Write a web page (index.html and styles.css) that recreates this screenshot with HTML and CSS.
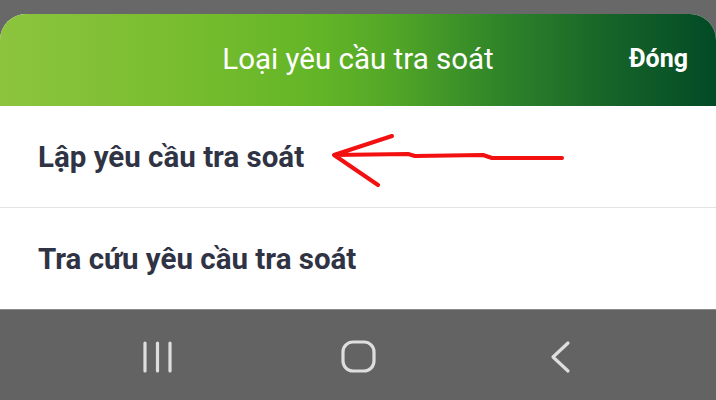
FILE: index.html
```html
<!DOCTYPE html>
<html lang="vi">
<head>
    <meta charset="UTF-8">
    <meta name="viewport" content="width=device-width, initial-scale=1.0">
    <title>Loại yêu cầu tra soát</title>
    <link rel="stylesheet" href="styles.css">
</head>
<body>
    <div class="screen">
        <div class="sheet">
            <div class="sheet-header">
                <div class="sheet-title">Loại yêu cầu tra soát</div>
                <div class="sheet-close">Đóng</div>
            </div>
            <div class="option-list">
                <div class="option">
                    Lập yêu cầu tra soát
                    <svg class="annotation" width="260" height="70" viewBox="0 0 260 70">
                        <path d="M72 13 L14 32 L58 62 M14 32 L88 31 L95 33 L163 32 L172 35 L242 35"
                              fill="none" stroke="#f21010" stroke-width="4" stroke-linecap="round" stroke-linejoin="round"/>
                    </svg>
                </div>
                <div class="option">Tra cứu yêu cầu tra soát</div>
            </div>
        </div>
        <div class="nav-bar">
            <svg class="nav-icon" width="40" height="40" viewBox="0 0 40 40">
                <path d="M7 6 V34 M19.5 6 V34 M32 6 V34" stroke="#dedede" stroke-width="3.2" stroke-linecap="round"/>
            </svg>
            <svg class="nav-icon" width="40" height="40" viewBox="0 0 40 40">
                <rect x="4" y="5" width="31" height="29" rx="10" fill="none" stroke="#dedede" stroke-width="3.2"/>
            </svg>
            <svg class="nav-icon" width="40" height="40" viewBox="0 0 40 40">
                <path d="M28 6 L13 20 L28 34" fill="none" stroke="#dedede" stroke-width="3.2" stroke-linecap="round" stroke-linejoin="round"/>
            </svg>
        </div>
    </div>
</body>
</html>
```

FILE: styles.css
```css
html, body {
    margin: 0;
    padding: 0;
}
body {
    font-family: Roboto, "Noto Sans", Arial, sans-serif;
    background-color: #686868;
    width: 716px;
    height: 400px;
    overflow: hidden;
}
.screen {
    display: flex;
    flex-direction: column;
    height: 400px;
    padding-top: 14px;
    box-sizing: border-box;
}
.sheet {
    background-color: #fff;
    border-radius: 26px 26px 0 0;
    overflow: hidden;
}
.sheet-header {
    position: relative;
    height: 92px;
    display: flex;
    align-items: center;
    justify-content: center;
    background: linear-gradient(90deg, #8dc43f 0%, #78bd2f 25%, #62b527 45%, #52a627 55%, #2f8429 70%, #176429 85%, #024a26 100%);
    color: #fff;
}
.sheet-title {
    font-size: 29.5px;
    font-weight: 400;
    margin-top: -3px;
}
.sheet-close {
    position: absolute;
    right: 28px;
    top: 0;
    bottom: 0;
    display: flex;
    align-items: center;
    margin-top: -3px;
    font-size: 25px;
    font-weight: 700;
}
.option {
    position: relative;
    height: 101px;
    display: flex;
    align-items: center;
    padding-left: 38px;
    font-size: 29.5px;
    font-weight: 700;
    color: #2f3344;
    border-bottom: 1px solid #e4e4e4;
}
.option:last-child {
    border-bottom: none;
}
.annotation {
    position: absolute;
    left: 320px;
    top: 17px;
}
.nav-bar {
    flex: 1;
    display: flex;
    align-items: center;
    justify-content: space-between;
    padding: 0 136px 0 138px;
    background-color: #636363;
    border-top: 1px solid #8a8a8a;
}
.nav-icon {
    display: block;
    margin-top: 4px;
}
```
